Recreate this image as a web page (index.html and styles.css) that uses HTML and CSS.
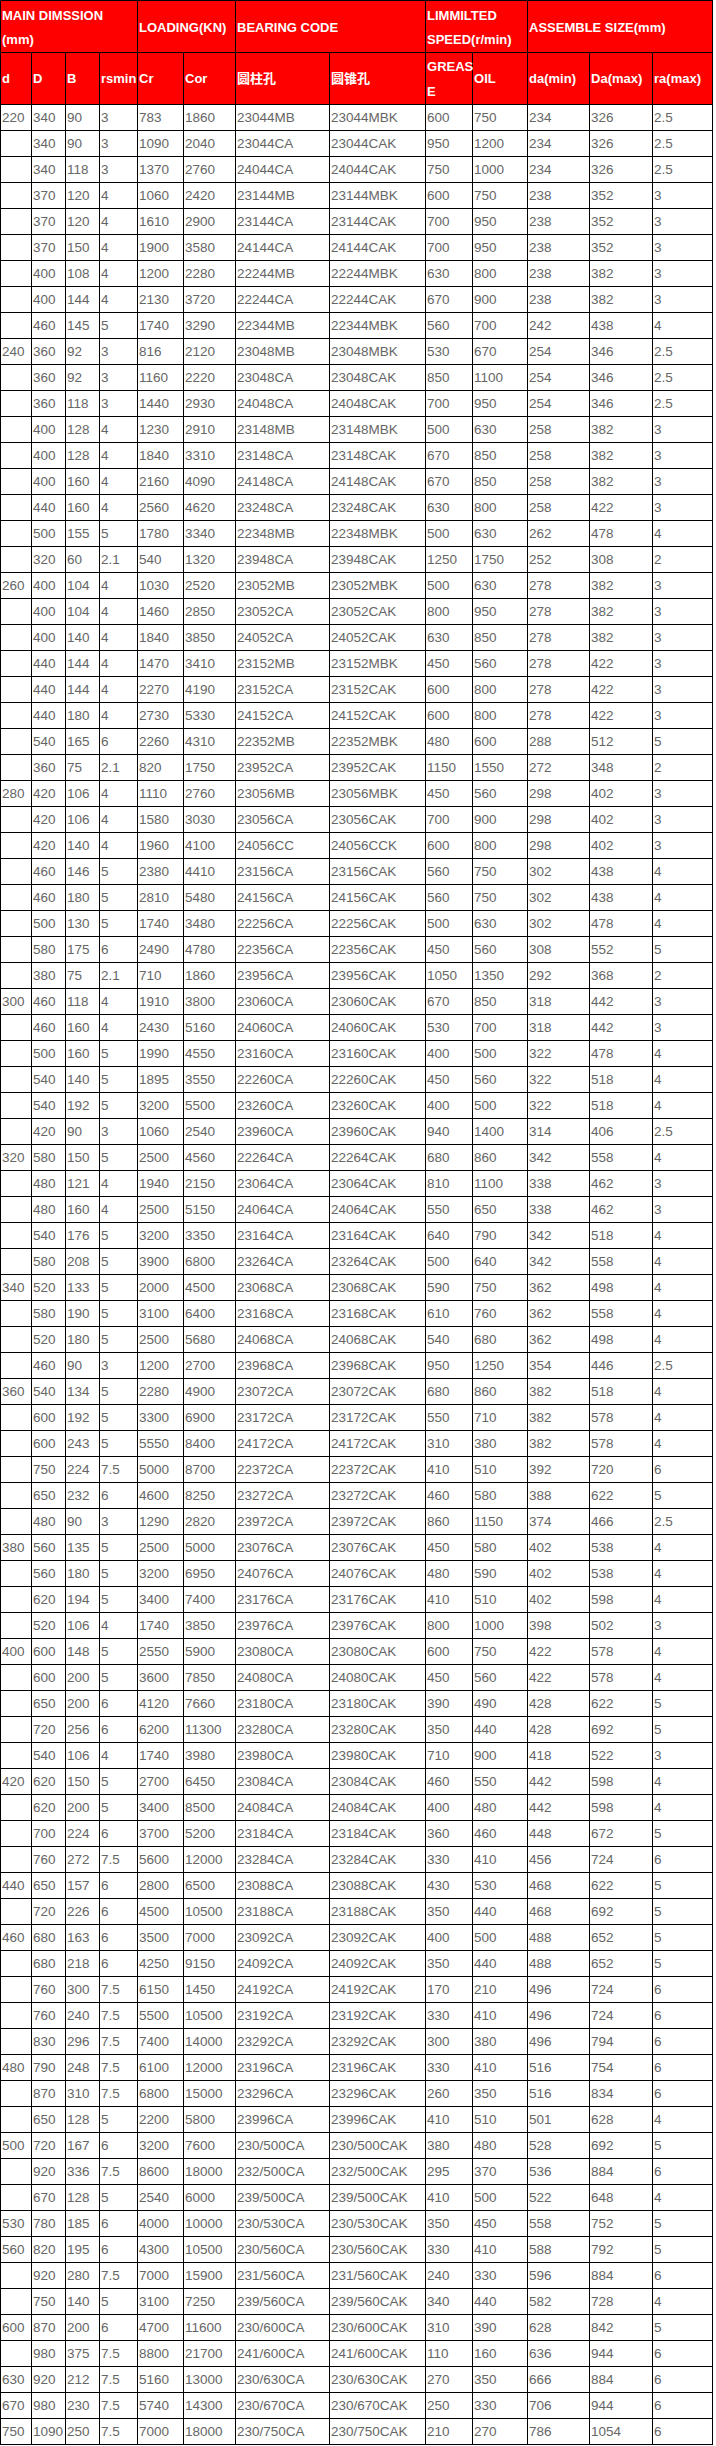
FILE: index.html
```html
<!DOCTYPE html>
<html>
<head>
<meta charset="utf-8">
<title>Bearing table</title>
<link rel="stylesheet" href="styles.css">
</head>
<body>
<table class="spec">
<colgroup>
<col class="c31"><col class="c34"><col class="c34"><col class="c38"><col class="c46"><col class="c52"><col class="c94"><col class="c96"><col class="c47"><col class="c55"><col class="c62"><col class="c63"><col class="c60">
</colgroup>
<thead>
<tr class="h1"><th colspan="4">MAIN DIMSSION (mm)</th><th colspan="2">LOADING(KN)</th><th colspan="2">BEARING CODE</th><th colspan="2">LIMMILTED SPEED(r/min)</th><th colspan="3">ASSEMBLE SIZE(mm)</th></tr>
<tr class="h2"><th>d</th><th>D</th><th>B</th><th>rsmin</th><th>Cr</th><th>Cor</th><th>圆柱孔</th><th>圆锥孔</th><th class="grease">GREAS<wbr>E</th><th>OIL</th><th>da(min)</th><th>Da(max)</th><th>ra(max)</th></tr>
</thead>
<tbody>
<tr><td>220</td><td>340</td><td>90</td><td>3</td><td>783</td><td>1860</td><td>23044MB</td><td>23044MBK</td><td>600</td><td>750</td><td>234</td><td>326</td><td>2.5</td></tr>
<tr><td></td><td>340</td><td>90</td><td>3</td><td>1090</td><td>2040</td><td>23044CA</td><td>23044CAK</td><td>950</td><td>1200</td><td>234</td><td>326</td><td>2.5</td></tr>
<tr><td></td><td>340</td><td>118</td><td>3</td><td>1370</td><td>2760</td><td>24044CA</td><td>24044CAK</td><td>750</td><td>1000</td><td>234</td><td>326</td><td>2.5</td></tr>
<tr><td></td><td>370</td><td>120</td><td>4</td><td>1060</td><td>2420</td><td>23144MB</td><td>23144MBK</td><td>600</td><td>750</td><td>238</td><td>352</td><td>3</td></tr>
<tr><td></td><td>370</td><td>120</td><td>4</td><td>1610</td><td>2900</td><td>23144CA</td><td>23144CAK</td><td>700</td><td>950</td><td>238</td><td>352</td><td>3</td></tr>
<tr><td></td><td>370</td><td>150</td><td>4</td><td>1900</td><td>3580</td><td>24144CA</td><td>24144CAK</td><td>700</td><td>950</td><td>238</td><td>352</td><td>3</td></tr>
<tr><td></td><td>400</td><td>108</td><td>4</td><td>1200</td><td>2280</td><td>22244MB</td><td>22244MBK</td><td>630</td><td>800</td><td>238</td><td>382</td><td>3</td></tr>
<tr><td></td><td>400</td><td>144</td><td>4</td><td>2130</td><td>3720</td><td>22244CA</td><td>22244CAK</td><td>670</td><td>900</td><td>238</td><td>382</td><td>3</td></tr>
<tr><td></td><td>460</td><td>145</td><td>5</td><td>1740</td><td>3290</td><td>22344MB</td><td>22344MBK</td><td>560</td><td>700</td><td>242</td><td>438</td><td>4</td></tr>
<tr><td>240</td><td>360</td><td>92</td><td>3</td><td>816</td><td>2120</td><td>23048MB</td><td>23048MBK</td><td>530</td><td>670</td><td>254</td><td>346</td><td>2.5</td></tr>
<tr><td></td><td>360</td><td>92</td><td>3</td><td>1160</td><td>2220</td><td>23048CA</td><td>23048CAK</td><td>850</td><td>1100</td><td>254</td><td>346</td><td>2.5</td></tr>
<tr><td></td><td>360</td><td>118</td><td>3</td><td>1440</td><td>2930</td><td>24048CA</td><td>24048CAK</td><td>700</td><td>950</td><td>254</td><td>346</td><td>2.5</td></tr>
<tr><td></td><td>400</td><td>128</td><td>4</td><td>1230</td><td>2910</td><td>23148MB</td><td>23148MBK</td><td>500</td><td>630</td><td>258</td><td>382</td><td>3</td></tr>
<tr><td></td><td>400</td><td>128</td><td>4</td><td>1840</td><td>3310</td><td>23148CA</td><td>23148CAK</td><td>670</td><td>850</td><td>258</td><td>382</td><td>3</td></tr>
<tr><td></td><td>400</td><td>160</td><td>4</td><td>2160</td><td>4090</td><td>24148CA</td><td>24148CAK</td><td>670</td><td>850</td><td>258</td><td>382</td><td>3</td></tr>
<tr><td></td><td>440</td><td>160</td><td>4</td><td>2560</td><td>4620</td><td>23248CA</td><td>23248CAK</td><td>630</td><td>800</td><td>258</td><td>422</td><td>3</td></tr>
<tr><td></td><td>500</td><td>155</td><td>5</td><td>1780</td><td>3340</td><td>22348MB</td><td>22348MBK</td><td>500</td><td>630</td><td>262</td><td>478</td><td>4</td></tr>
<tr><td></td><td>320</td><td>60</td><td>2.1</td><td>540</td><td>1320</td><td>23948CA</td><td>23948CAK</td><td>1250</td><td>1750</td><td>252</td><td>308</td><td>2</td></tr>
<tr><td>260</td><td>400</td><td>104</td><td>4</td><td>1030</td><td>2520</td><td>23052MB</td><td>23052MBK</td><td>500</td><td>630</td><td>278</td><td>382</td><td>3</td></tr>
<tr><td></td><td>400</td><td>104</td><td>4</td><td>1460</td><td>2850</td><td>23052CA</td><td>23052CAK</td><td>800</td><td>950</td><td>278</td><td>382</td><td>3</td></tr>
<tr><td></td><td>400</td><td>140</td><td>4</td><td>1840</td><td>3850</td><td>24052CA</td><td>24052CAK</td><td>630</td><td>850</td><td>278</td><td>382</td><td>3</td></tr>
<tr><td></td><td>440</td><td>144</td><td>4</td><td>1470</td><td>3410</td><td>23152MB</td><td>23152MBK</td><td>450</td><td>560</td><td>278</td><td>422</td><td>3</td></tr>
<tr><td></td><td>440</td><td>144</td><td>4</td><td>2270</td><td>4190</td><td>23152CA</td><td>23152CAK</td><td>600</td><td>800</td><td>278</td><td>422</td><td>3</td></tr>
<tr><td></td><td>440</td><td>180</td><td>4</td><td>2730</td><td>5330</td><td>24152CA</td><td>24152CAK</td><td>600</td><td>800</td><td>278</td><td>422</td><td>3</td></tr>
<tr><td></td><td>540</td><td>165</td><td>6</td><td>2260</td><td>4310</td><td>22352MB</td><td>22352MBK</td><td>480</td><td>600</td><td>288</td><td>512</td><td>5</td></tr>
<tr><td></td><td>360</td><td>75</td><td>2.1</td><td>820</td><td>1750</td><td>23952CA</td><td>23952CAK</td><td>1150</td><td>1550</td><td>272</td><td>348</td><td>2</td></tr>
<tr><td>280</td><td>420</td><td>106</td><td>4</td><td>1110</td><td>2760</td><td>23056MB</td><td>23056MBK</td><td>450</td><td>560</td><td>298</td><td>402</td><td>3</td></tr>
<tr><td></td><td>420</td><td>106</td><td>4</td><td>1580</td><td>3030</td><td>23056CA</td><td>23056CAK</td><td>700</td><td>900</td><td>298</td><td>402</td><td>3</td></tr>
<tr><td></td><td>420</td><td>140</td><td>4</td><td>1960</td><td>4100</td><td>24056CC</td><td>24056CCK</td><td>600</td><td>800</td><td>298</td><td>402</td><td>3</td></tr>
<tr><td></td><td>460</td><td>146</td><td>5</td><td>2380</td><td>4410</td><td>23156CA</td><td>23156CAK</td><td>560</td><td>750</td><td>302</td><td>438</td><td>4</td></tr>
<tr><td></td><td>460</td><td>180</td><td>5</td><td>2810</td><td>5480</td><td>24156CA</td><td>24156CAK</td><td>560</td><td>750</td><td>302</td><td>438</td><td>4</td></tr>
<tr><td></td><td>500</td><td>130</td><td>5</td><td>1740</td><td>3480</td><td>22256CA</td><td>22256CAK</td><td>500</td><td>630</td><td>302</td><td>478</td><td>4</td></tr>
<tr><td></td><td>580</td><td>175</td><td>6</td><td>2490</td><td>4780</td><td>22356CA</td><td>22356CAK</td><td>450</td><td>560</td><td>308</td><td>552</td><td>5</td></tr>
<tr><td></td><td>380</td><td>75</td><td>2.1</td><td>710</td><td>1860</td><td>23956CA</td><td>23956CAK</td><td>1050</td><td>1350</td><td>292</td><td>368</td><td>2</td></tr>
<tr><td>300</td><td>460</td><td>118</td><td>4</td><td>1910</td><td>3800</td><td>23060CA</td><td>23060CAK</td><td>670</td><td>850</td><td>318</td><td>442</td><td>3</td></tr>
<tr><td></td><td>460</td><td>160</td><td>4</td><td>2430</td><td>5160</td><td>24060CA</td><td>24060CAK</td><td>530</td><td>700</td><td>318</td><td>442</td><td>3</td></tr>
<tr><td></td><td>500</td><td>160</td><td>5</td><td>1990</td><td>4550</td><td>23160CA</td><td>23160CAK</td><td>400</td><td>500</td><td>322</td><td>478</td><td>4</td></tr>
<tr><td></td><td>540</td><td>140</td><td>5</td><td>1895</td><td>3550</td><td>22260CA</td><td>22260CAK</td><td>450</td><td>560</td><td>322</td><td>518</td><td>4</td></tr>
<tr><td></td><td>540</td><td>192</td><td>5</td><td>3200</td><td>5500</td><td>23260CA</td><td>23260CAK</td><td>400</td><td>500</td><td>322</td><td>518</td><td>4</td></tr>
<tr><td></td><td>420</td><td>90</td><td>3</td><td>1060</td><td>2540</td><td>23960CA</td><td>23960CAK</td><td>940</td><td>1400</td><td>314</td><td>406</td><td>2.5</td></tr>
<tr><td>320</td><td>580</td><td>150</td><td>5</td><td>2500</td><td>4560</td><td>22264CA</td><td>22264CAK</td><td>680</td><td>860</td><td>342</td><td>558</td><td>4</td></tr>
<tr><td></td><td>480</td><td>121</td><td>4</td><td>1940</td><td>2150</td><td>23064CA</td><td>23064CAK</td><td>810</td><td>1100</td><td>338</td><td>462</td><td>3</td></tr>
<tr><td></td><td>480</td><td>160</td><td>4</td><td>2500</td><td>5150</td><td>24064CA</td><td>24064CAK</td><td>550</td><td>650</td><td>338</td><td>462</td><td>3</td></tr>
<tr><td></td><td>540</td><td>176</td><td>5</td><td>3200</td><td>3350</td><td>23164CA</td><td>23164CAK</td><td>640</td><td>790</td><td>342</td><td>518</td><td>4</td></tr>
<tr><td></td><td>580</td><td>208</td><td>5</td><td>3900</td><td>6800</td><td>23264CA</td><td>23264CAK</td><td>500</td><td>640</td><td>342</td><td>558</td><td>4</td></tr>
<tr><td>340</td><td>520</td><td>133</td><td>5</td><td>2000</td><td>4500</td><td>23068CA</td><td>23068CAK</td><td>590</td><td>750</td><td>362</td><td>498</td><td>4</td></tr>
<tr><td></td><td>580</td><td>190</td><td>5</td><td>3100</td><td>6400</td><td>23168CA</td><td>23168CAK</td><td>610</td><td>760</td><td>362</td><td>558</td><td>4</td></tr>
<tr><td></td><td>520</td><td>180</td><td>5</td><td>2500</td><td>5680</td><td>24068CA</td><td>24068CAK</td><td>540</td><td>680</td><td>362</td><td>498</td><td>4</td></tr>
<tr><td></td><td>460</td><td>90</td><td>3</td><td>1200</td><td>2700</td><td>23968CA</td><td>23968CAK</td><td>950</td><td>1250</td><td>354</td><td>446</td><td>2.5</td></tr>
<tr><td>360</td><td>540</td><td>134</td><td>5</td><td>2280</td><td>4900</td><td>23072CA</td><td>23072CAK</td><td>680</td><td>860</td><td>382</td><td>518</td><td>4</td></tr>
<tr><td></td><td>600</td><td>192</td><td>5</td><td>3300</td><td>6900</td><td>23172CA</td><td>23172CAK</td><td>550</td><td>710</td><td>382</td><td>578</td><td>4</td></tr>
<tr><td></td><td>600</td><td>243</td><td>5</td><td>5550</td><td>8400</td><td>24172CA</td><td>24172CAK</td><td>310</td><td>380</td><td>382</td><td>578</td><td>4</td></tr>
<tr><td></td><td>750</td><td>224</td><td>7.5</td><td>5000</td><td>8700</td><td>22372CA</td><td>22372CAK</td><td>410</td><td>510</td><td>392</td><td>720</td><td>6</td></tr>
<tr><td></td><td>650</td><td>232</td><td>6</td><td>4600</td><td>8250</td><td>23272CA</td><td>23272CAK</td><td>460</td><td>580</td><td>388</td><td>622</td><td>5</td></tr>
<tr><td></td><td>480</td><td>90</td><td>3</td><td>1290</td><td>2820</td><td>23972CA</td><td>23972CAK</td><td>860</td><td>1150</td><td>374</td><td>466</td><td>2.5</td></tr>
<tr><td>380</td><td>560</td><td>135</td><td>5</td><td>2500</td><td>5000</td><td>23076CA</td><td>23076CAK</td><td>450</td><td>580</td><td>402</td><td>538</td><td>4</td></tr>
<tr><td></td><td>560</td><td>180</td><td>5</td><td>3200</td><td>6950</td><td>24076CA</td><td>24076CAK</td><td>480</td><td>590</td><td>402</td><td>538</td><td>4</td></tr>
<tr><td></td><td>620</td><td>194</td><td>5</td><td>3400</td><td>7400</td><td>23176CA</td><td>23176CAK</td><td>410</td><td>510</td><td>402</td><td>598</td><td>4</td></tr>
<tr><td></td><td>520</td><td>106</td><td>4</td><td>1740</td><td>3850</td><td>23976CA</td><td>23976CAK</td><td>800</td><td>1000</td><td>398</td><td>502</td><td>3</td></tr>
<tr><td>400</td><td>600</td><td>148</td><td>5</td><td>2550</td><td>5900</td><td>23080CA</td><td>23080CAK</td><td>600</td><td>750</td><td>422</td><td>578</td><td>4</td></tr>
<tr><td></td><td>600</td><td>200</td><td>5</td><td>3600</td><td>7850</td><td>24080CA</td><td>24080CAK</td><td>450</td><td>560</td><td>422</td><td>578</td><td>4</td></tr>
<tr><td></td><td>650</td><td>200</td><td>6</td><td>4120</td><td>7660</td><td>23180CA</td><td>23180CAK</td><td>390</td><td>490</td><td>428</td><td>622</td><td>5</td></tr>
<tr><td></td><td>720</td><td>256</td><td>6</td><td>6200</td><td>11300</td><td>23280CA</td><td>23280CAK</td><td>350</td><td>440</td><td>428</td><td>692</td><td>5</td></tr>
<tr><td></td><td>540</td><td>106</td><td>4</td><td>1740</td><td>3980</td><td>23980CA</td><td>23980CAK</td><td>710</td><td>900</td><td>418</td><td>522</td><td>3</td></tr>
<tr><td>420</td><td>620</td><td>150</td><td>5</td><td>2700</td><td>6450</td><td>23084CA</td><td>23084CAK</td><td>460</td><td>550</td><td>442</td><td>598</td><td>4</td></tr>
<tr><td></td><td>620</td><td>200</td><td>5</td><td>3400</td><td>8500</td><td>24084CA</td><td>24084CAK</td><td>400</td><td>480</td><td>442</td><td>598</td><td>4</td></tr>
<tr><td></td><td>700</td><td>224</td><td>6</td><td>3700</td><td>5200</td><td>23184CA</td><td>23184CAK</td><td>360</td><td>460</td><td>448</td><td>672</td><td>5</td></tr>
<tr><td></td><td>760</td><td>272</td><td>7.5</td><td>5600</td><td>12000</td><td>23284CA</td><td>23284CAK</td><td>330</td><td>410</td><td>456</td><td>724</td><td>6</td></tr>
<tr><td>440</td><td>650</td><td>157</td><td>6</td><td>2800</td><td>6500</td><td>23088CA</td><td>23088CAK</td><td>430</td><td>530</td><td>468</td><td>622</td><td>5</td></tr>
<tr><td></td><td>720</td><td>226</td><td>6</td><td>4500</td><td>10500</td><td>23188CA</td><td>23188CAK</td><td>350</td><td>440</td><td>468</td><td>692</td><td>5</td></tr>
<tr><td>460</td><td>680</td><td>163</td><td>6</td><td>3500</td><td>7000</td><td>23092CA</td><td>23092CAK</td><td>400</td><td>500</td><td>488</td><td>652</td><td>5</td></tr>
<tr><td></td><td>680</td><td>218</td><td>6</td><td>4250</td><td>9150</td><td>24092CA</td><td>24092CAK</td><td>350</td><td>440</td><td>488</td><td>652</td><td>5</td></tr>
<tr><td></td><td>760</td><td>300</td><td>7.5</td><td>6150</td><td>1450</td><td>24192CA</td><td>24192CAK</td><td>170</td><td>210</td><td>496</td><td>724</td><td>6</td></tr>
<tr><td></td><td>760</td><td>240</td><td>7.5</td><td>5500</td><td>10500</td><td>23192CA</td><td>23192CAK</td><td>330</td><td>410</td><td>496</td><td>724</td><td>6</td></tr>
<tr><td></td><td>830</td><td>296</td><td>7.5</td><td>7400</td><td>14000</td><td>23292CA</td><td>23292CAK</td><td>300</td><td>380</td><td>496</td><td>794</td><td>6</td></tr>
<tr><td>480</td><td>790</td><td>248</td><td>7.5</td><td>6100</td><td>12000</td><td>23196CA</td><td>23196CAK</td><td>330</td><td>410</td><td>516</td><td>754</td><td>6</td></tr>
<tr><td></td><td>870</td><td>310</td><td>7.5</td><td>6800</td><td>15000</td><td>23296CA</td><td>23296CAK</td><td>260</td><td>350</td><td>516</td><td>834</td><td>6</td></tr>
<tr><td></td><td>650</td><td>128</td><td>5</td><td>2200</td><td>5800</td><td>23996CA</td><td>23996CAK</td><td>410</td><td>510</td><td>501</td><td>628</td><td>4</td></tr>
<tr><td>500</td><td>720</td><td>167</td><td>6</td><td>3200</td><td>7600</td><td>230/500CA</td><td>230/500CAK</td><td>380</td><td>480</td><td>528</td><td>692</td><td>5</td></tr>
<tr><td></td><td>920</td><td>336</td><td>7.5</td><td>8600</td><td>18000</td><td>232/500CA</td><td>232/500CAK</td><td>295</td><td>370</td><td>536</td><td>884</td><td>6</td></tr>
<tr><td></td><td>670</td><td>128</td><td>5</td><td>2540</td><td>6000</td><td>239/500CA</td><td>239/500CAK</td><td>410</td><td>500</td><td>522</td><td>648</td><td>4</td></tr>
<tr><td>530</td><td>780</td><td>185</td><td>6</td><td>4000</td><td>10000</td><td>230/530CA</td><td>230/530CAK</td><td>350</td><td>450</td><td>558</td><td>752</td><td>5</td></tr>
<tr><td>560</td><td>820</td><td>195</td><td>6</td><td>4300</td><td>10500</td><td>230/560CA</td><td>230/560CAK</td><td>330</td><td>410</td><td>588</td><td>792</td><td>5</td></tr>
<tr><td></td><td>920</td><td>280</td><td>7.5</td><td>7000</td><td>15900</td><td>231/560CA</td><td>231/560CAK</td><td>240</td><td>330</td><td>596</td><td>884</td><td>6</td></tr>
<tr><td></td><td>750</td><td>140</td><td>5</td><td>3100</td><td>7250</td><td>239/560CA</td><td>239/560CAK</td><td>340</td><td>440</td><td>582</td><td>728</td><td>4</td></tr>
<tr><td>600</td><td>870</td><td>200</td><td>6</td><td>4700</td><td>11600</td><td>230/600CA</td><td>230/600CAK</td><td>310</td><td>390</td><td>628</td><td>842</td><td>5</td></tr>
<tr><td></td><td>980</td><td>375</td><td>7.5</td><td>8800</td><td>21700</td><td>241/600CA</td><td>241/600CAK</td><td>110</td><td>160</td><td>636</td><td>944</td><td>6</td></tr>
<tr><td>630</td><td>920</td><td>212</td><td>7.5</td><td>5160</td><td>13000</td><td>230/630CA</td><td>230/630CAK</td><td>270</td><td>350</td><td>666</td><td>884</td><td>6</td></tr>
<tr><td>670</td><td>980</td><td>230</td><td>7.5</td><td>5740</td><td>14300</td><td>230/670CA</td><td>230/670CAK</td><td>250</td><td>330</td><td>706</td><td>944</td><td>6</td></tr>
<tr><td>750</td><td>1090</td><td>250</td><td>7.5</td><td>7000</td><td>18000</td><td>230/750CA</td><td>230/750CAK</td><td>210</td><td>270</td><td>786</td><td>1054</td><td>6</td></tr>
</tbody>
</table>
</body>
</html>
```
FILE: styles.css
```css
body {
  margin: 0;
  background: #fff;
}

.spec {
  border-collapse: collapse;
  table-layout: fixed;
  width: 713px;
  font-family: "Liberation Sans", Arial, sans-serif;
  font-size: 13.5px;
  color: #666;
}

.c31 { width: 31px; }
.c34 { width: 34px; }
.c38 { width: 38px; }
.c46 { width: 46px; }
.c47 { width: 47px; }
.c52 { width: 52px; }
.c55 { width: 55px; }
.c60 { width: 60px; }
.c62 { width: 62px; }
.c63 { width: 63px; }
.c94 { width: 94px; }
.c96 { width: 96px; }

.spec th,
.spec td {
  box-sizing: border-box;
  border: 1px solid #000;
  padding: 0 1px;
  text-align: left;
  vertical-align: middle;
  white-space: normal;
  overflow: visible;
}

.spec td {
  height: 26px;
  line-height: 20px;
}

.spec th {
  background: #ff0000;
  color: #fff;
  font-family: "Liberation Sans", Arial, "Noto Sans CJK SC", sans-serif;
  font-weight: bold;
  font-size: 13px;
}

.h1 th {
  height: 52px;
  padding-top: 3px;
  line-height: 24px;
}

.h2 th {
  height: 52px;
  line-height: 25px;
}

.spec th.grease {
  padding: 0 0 0 1px;
}
```
